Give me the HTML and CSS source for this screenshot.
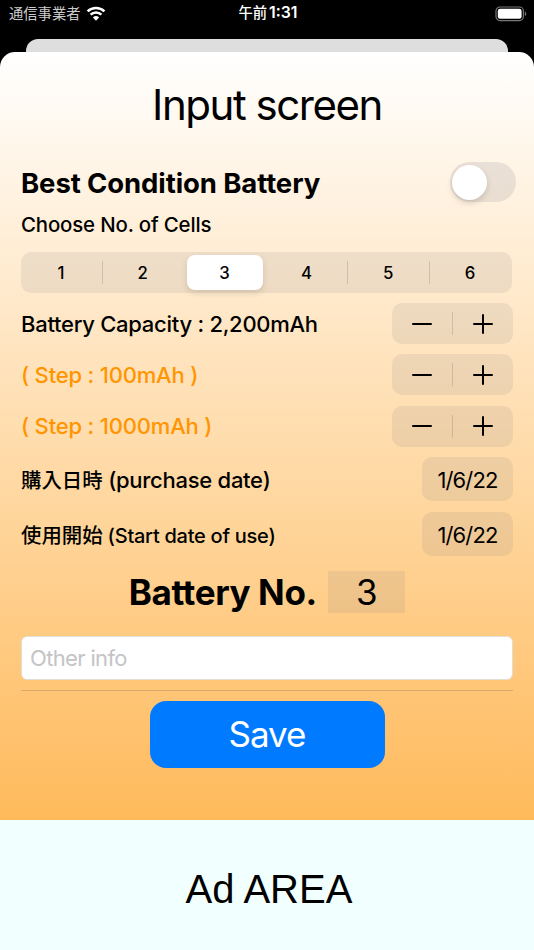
FILE: index.html
```html
<!DOCTYPE html>
<html lang="ja">
<head>
  <meta charset="UTF-8">
  <meta name="viewport" content="width=device-width, initial-scale=1.0">
  <title>Input screen</title>
  <link rel="stylesheet" href="styles.css">
</head>
<body>
  <div class="status-bar">
    <div class="carrier">
      <span>通信事業者</span>
      <svg class="wifi" viewBox="0 0 20 15">
        <path d="M1.6 5.4a12.2 12.2 0 0 1 16.8 0" />
        <path d="M4.6 8.6a7.8 7.8 0 0 1 10.8 0" />
        <path class="dot" d="M6.9 11.5a4.5 4.5 0 0 1 6.2 0L10 14.7z" />
      </svg>
    </div>
    <div class="time">午前<span>1:31</span></div>
    <svg class="battery" viewBox="0 0 32 16">
      <rect class="shell" x="1" y="1" width="27.4" height="13.6" rx="4" />
      <rect class="level" x="2.8" y="2.8" width="23.8" height="10" rx="2.3" />
      <path class="cap" d="M29.8 5.5c2 .8 2 3.8 0 4.6z" />
    </svg>
  </div>

  <div class="back-sheet"></div>

  <div class="sheet">
    <h1>Input screen</h1>

    <div class="row row-condition">
      <h2>Best Condition Battery</h2>
      <div class="switch"><div class="knob"></div></div>
    </div>

    <div class="cells-label"><span>Choose No. of Cells</span></div>
    <div class="segments">
      <div class="segment">1</div>
      <div class="segment line">2</div>
      <div class="segment active">3</div>
      <div class="segment">4</div>
      <div class="segment line">5</div>
      <div class="segment line">6</div>
    </div>

    <div class="row row-step">
      <span class="label">Battery Capacity : 2,200mAh</span>
      <div class="stepper">
        <svg viewBox="0 0 20 20"><path d="M1 9.9h18" /></svg>
        <svg viewBox="0 0 20 20"><path d="M1 10h18M10 1v18" /></svg>
      </div>
    </div>
    <div class="row row-step">
      <span class="label step">( Step : 100mAh )</span>
      <div class="stepper">
        <svg viewBox="0 0 20 20"><path d="M1 9.9h18" /></svg>
        <svg viewBox="0 0 20 20"><path d="M1 10h18M10 1v18" /></svg>
      </div>
    </div>
    <div class="row row-step">
      <span class="label step">( Step : 1000mAh )</span>
      <div class="stepper">
        <svg viewBox="0 0 20 20"><path d="M1 9.9h18" /></svg>
        <svg viewBox="0 0 20 20"><path d="M1 10h18M10 1v18" /></svg>
      </div>
    </div>

    <div class="row row-date">
      <span class="label"><span class="kanji">購入日時</span> (purchase date)</span>
      <div class="date">1/6/22</div>
    </div>
    <div class="row row-date">
      <span class="label start"><span class="kanji">使用開始</span> (Start date of use)</span>
      <div class="date">1/6/22</div>
    </div>

    <div class="battery-no">
      <h3>Battery No.</h3>
      <div class="number">3</div>
    </div>

    <input type="text" class="info" placeholder="Other info">
    <hr>
    <button class="save">Save</button>
  </div>

  <div class="ad-area">Ad AREA</div>
</body>
</html>
```
FILE: styles.css
```css
* {
  box-sizing: border-box;
}
body {
  margin: 0;
  background-color: #000;
  font-family: 'Inter', 'Noto Sans CJK JP', sans-serif;
  color: #000;
  height: 950px;
  display: flex;
  flex-direction: column;
  overflow: hidden;
}

/* Barra de status */
.status-bar {
  flex: none;
  height: 39px;
  padding: 0 7px 12px 9px;
  display: grid;
  grid-template-columns: 1fr auto 1fr;
  align-items: center;
  color: #fff;
}
.carrier {
  display: flex;
  align-items: center;
  gap: 6px;
  font-size: 14.3px;
  font-weight: 400;
  line-height: 18px;
  color: #ccc;
}
.wifi {
  width: 20px;
  height: 15px;
  margin-top: -1px;
  fill: none;
  stroke: #fff;
  stroke-width: 2.5;
}
.wifi .dot {
  fill: #fff;
  stroke: none;
}
.time {
  font-size: 14.3px;
  font-weight: 500;
  line-height: 18px;
  margin-top: -2px;
}
.time span {
  font-size: 15.8px;
  font-weight: 600;
  margin-left: 2px;
}
.battery {
  width: 32px;
  height: 16px;
  justify-self: end;
}
.shell {
  fill: none;
  stroke: #777;
  stroke-width: 1.2;
}
.level {
  fill: #fff;
}
.cap {
  fill: #777;
}

/* Folhas */
.back-sheet {
  flex: none;
  height: 13px;
  margin: 0 26px;
  background-color: #dedede;
  border-radius: 12px 12px 0 0;
}
.sheet {
  flex: none;
  height: 768px;
  padding: 0 21px;
  border-radius: 15px 15px 0 0;
  background: linear-gradient(#fff, #ffba5b);
}
h1 {
  margin: 0;
  height: 110px;
  line-height: 105px;
  font-size: 42px;
  font-weight: 400;
  letter-spacing: -1.45px;
  text-align: center;
}
.row {
  display: flex;
  align-items: center;
  justify-content: space-between;
}
.row-condition {
  height: 40px;
  margin-right: -3px;
}
h2 {
  margin: 0;
  padding-top: 1px;
  font-size: 27.5px;
  font-weight: 700;
  letter-spacing: -0.1px;
}
.switch {
  width: 66px;
  height: 40px;
  padding: 2.5px 2px;
  border-radius: 20px;
  background-color: rgba(120, 120, 128, 0.16);
}
.knob {
  width: 35px;
  height: 35px;
  border-radius: 50%;
  background-color: #fff;
  box-shadow: 0 3px 6px rgba(0, 0, 0, 0.15);
}
.cells-label {
  height: 50px;
  line-height: 45px;
  font-size: 20.4px;
  font-weight: 500;
  letter-spacing: -0.15px;
}
.segments {
  display: grid;
  grid-template-columns: repeat(6, 1fr);
  height: 41px;
  margin: 0 1px 10px 0;
  border-radius: 10px;
  background-color: rgba(120, 120, 128, 0.13);
}
.segment {
  display: flex;
  align-items: center;
  justify-content: center;
  padding: 1px 2px 0 0;
  font-size: 16.8px;
  font-weight: 500;
}
.line {
  margin-left: -1px;
  padding-right: 1px;
  background: linear-gradient(rgba(60, 60, 67, 0.18), rgba(60, 60, 67, 0.18)) no-repeat left center / 1px 23px;
}
.active {
  margin: 3px 4px 3px 2px;
  padding-right: 0;
  border-radius: 8px;
  background-color: #fff;
  box-shadow: 0 3px 7px rgba(0, 0, 0, 0.12);
}
.row-step {
  height: 41px;
  margin-bottom: 10.4px;
}
.label {
  font-size: 22px;
  font-weight: 500;
  letter-spacing: -0.27px;
  white-space: nowrap;
}
.step {
  color: #ff9500;
  letter-spacing: -0.18px;
}
.start {
  font-size: 20px;
  letter-spacing: -0.27px;
}
.stepper {
  display: grid;
  grid-template-columns: 1fr 1fr;
  place-items: center;
  width: 121px;
  height: 41px;
  border-radius: 10px;
  background: linear-gradient(rgba(60, 60, 67, 0.18), rgba(60, 60, 67, 0.18)) no-repeat 60px center / 1px 23px, rgba(120, 120, 128, 0.13);
}
.stepper svg {
  width: 20px;
  height: 20px;
  stroke: #000;
  stroke-width: 2;
  stroke-linecap: round;
}
.row-date {
  height: 44px;
  margin-bottom: 10.8px;
}
.kanji {
  font-size: 20.4px;
  letter-spacing: 0;
}
.date {
  width: 91px;
  height: 44px;
  border-radius: 10px;
  background-color: rgba(120, 120, 128, 0.13);
  line-height: 46px;
  text-align: center;
  font-size: 22px;
  letter-spacing: -0.9px;
}
.battery-no {
  display: flex;
  align-items: center;
  justify-content: center;
  gap: 11.5px;
  height: 42px;
  margin-top: 15px;
}
h3 {
  margin: 0;
  font-size: 35px;
  font-weight: 700;
  letter-spacing: -0.4px;
}
.number {
  width: 77px;
  height: 42px;
  line-height: 42px;
  text-align: center;
  font-size: 35px;
  background-color: rgba(120, 120, 128, 0.13);
}
.info {
  display: block;
  width: 100%;
  height: 44px;
  margin-top: 23px;
  padding: 1px 8px 0;
  border: 1px solid #e3dcd3;
  border-radius: 6px;
  background-color: #fff;
  font-family: inherit;
  font-size: 22px;
  letter-spacing: -0.65px;
}
.info::placeholder {
  color: #c4c4c6;
}
hr {
  height: 1px;
  margin: 10px 0;
  border: none;
  background-color: rgba(60, 60, 67, 0.2);
}
.save {
  display: block;
  width: 235px;
  height: 67px;
  margin: 0 auto;
  border: none;
  border-radius: 16px;
  background-color: #007aff;
  color: #fff;
  font-family: inherit;
  font-size: 35px;
  letter-spacing: -1px;
}

.ad-area {
  flex: 1;
  min-height: 0;
  background-color: #f2ffff;
  font-family: 'Liberation Sans', Arial, sans-serif;
  font-size: 40px;
  line-height: 138px;
  text-align: center;
  padding-left: 4px;
}
```
